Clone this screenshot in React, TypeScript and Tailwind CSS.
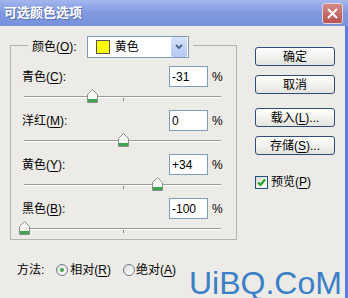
import type { ReactNode } from 'react';

const FONT = { fontFamily: '"Liberation Sans", "Noto Sans CJK SC", sans-serif' };

interface ChannelRow {
  id: string;
  name: string;
  key: string;
  value: number;
}

const channels: ChannelRow[] = [
  { id: 'c', name: '青色', key: 'C', value: -31 },
  { id: 'm', name: '洋红', key: 'M', value: 0 },
  { id: 'y', name: '黄色', key: 'Y', value: 34 },
  { id: 'k', name: '黑色', key: 'B', value: -100 },
];

function formatValue(v: number) {
  if (v > 0) return `+${v}`;
  return String(v);
}

function Mnemonic({ label, k, tail = '' }: { label: string; k: string; tail?: string }) {
  return (
    <span>
      {label}(<span className="underline underline-offset-[2px]">{k}</span>){tail}
    </span>
  );
}

function Thumb() {
  return (
    <svg width="11" height="14" viewBox="0 0 11 14">
      <path d="M0.5 13.5 V5.5 L5.5 0.5 L10.5 5.5 V13.5 Z" fill="#f6f6f2" stroke="#8c8c88" />
      <rect x="1" y="10" width="9" height="3" fill="#3da552" />
      <line x1="1.5" y1="6" x2="5.5" y2="2" stroke="#ffffff" />
    </svg>
  );
}

function Slider({ value }: { value: number }) {
  // track spans x 24..221, centre at 123.5
  const left = 99.5 + value * 0.99 - 5.5;
  return (
    <div className="relative ml-[2px] h-[23px] w-[197px]">
      <div className="absolute left-0 right-0 top-[9px] h-px bg-[#9a9a96]" />
      <div className="absolute left-0 right-0 top-[10px] h-px bg-white" />
      <div className="absolute left-[99px] top-[11px] h-[3px] w-px bg-[#8a8a86]" />
      <div className="absolute top-[2px]" style={{ left }}>
        <Thumb />
      </div>
    </div>
  );
}

function Row({ row }: { row: ChannelRow }) {
  return (
    <>
      <div className="flex h-[21px] w-[200px] items-center">
        <span className="flex-1">
          <Mnemonic label={row.name} k={row.key} tail=":" />
        </span>
        <div className="flex h-[21px] w-[39px] items-center border border-[#7f9db9] bg-white pl-[2px]">
          {formatValue(row.value)}
        </div>
        <span className="ml-[4px] w-[10px]">%</span>
      </div>
      <Slider value={row.value} />
    </>
  );
}

function XpButton({ children }: { children: ReactNode }) {
  return (
    <div className="flex h-[19px] w-[80px] items-center justify-center rounded-[3px] border border-[#2f4d7c] bg-gradient-to-b from-white to-[#e4e4de] text-[12px] text-black">
      {children}
    </div>
  );
}

function Radio({ checked }: { checked?: boolean }) {
  return (
    <div className="flex h-[12px] w-[12px] items-center justify-center rounded-full border border-[#6c7c90] bg-gradient-to-br from-[#dcdcd6] to-white">
      {checked && <div className="h-[4px] w-[4px] rounded-full bg-[#3aa84a]" />}
    </div>
  );
}

export default function App() {
  return (
    <div
      className="relative flex h-[298px] w-[348px] flex-col overflow-hidden bg-[#ecebe7] text-[12px] text-black"
      style={FONT}
    >
      {/* title bar */}
      <div className="flex h-[26px] shrink-0 items-center justify-between bg-gradient-to-b from-[#a4b6ee] via-[#7f98e0] to-[#7892de] pl-[4px] pr-[5px]">
        <span className="text-[13px] font-bold text-white [text-shadow:1px_1px_0_#5a6fb0]">可选颜色选项</span>
        <div className="flex h-[21px] w-[21px] items-center justify-center rounded-[3px] border border-[#e8d4d4] bg-gradient-to-b from-[#d28a86] to-[#b7514f]">
          <svg width="11" height="11" viewBox="0 0 11 11">
            <path d="M1.5 1.5 L9.5 9.5 M9.5 1.5 L1.5 9.5" stroke="white" strokeWidth="2" strokeLinecap="round" />
          </svg>
        </div>
      </div>

      <div className="flex flex-1 border-r-[3px] border-[#5b7de0]">
        {/* left column */}
        <div className="flex w-[237px] flex-col pl-[10px]">
          <div className="mt-[19px] h-[195px] w-[227px] border border-[#b4b4ae] pl-[11px]">
            <div className="-mt-[10px] ml-[6px] flex h-[22px] w-fit items-center bg-[#ecebe7] px-[4px]">
              <Mnemonic label="颜色" k="O" tail=":" />
              <div className="ml-[10px] flex h-[22px] w-[102px] items-center border border-[#7f9db9] bg-white pl-[8px] pr-px">
                <div className="h-[14px] w-[14px] border border-[#555] bg-[#ffff00]" />
                <span className="ml-[5px] flex-1">黄色</span>
                <div className="flex h-[20px] w-[16px] items-center justify-center rounded-[2px] bg-gradient-to-b from-[#d6e2fb] to-[#b3c8f4]">
                  <svg width="8" height="6" viewBox="0 0 8 6">
                    <path d="M1 1 L4 4 L7 1" fill="none" stroke="#4d6185" strokeWidth="1.8" />
                  </svg>
                </div>
              </div>
            </div>
            <div className="mt-[8px] flex flex-col">
              {channels.map(row => (
                <Row key={row.id} row={row} />
              ))}
            </div>
          </div>

          <div className="ml-[7px] mt-[20px] flex h-[20px] items-center">
            <span>方法:</span>
            <div className="ml-[12px]">
              <Radio checked />
            </div>
            <span className="ml-[2px]">
              <Mnemonic label="相对" k="R" />
            </span>
            <div className="ml-[12px]">
              <Radio />
            </div>
            <span className="ml-[1px]">
              <Mnemonic label="绝对" k="A" />
            </span>
          </div>
        </div>

        {/* right column */}
        <div className="ml-[18px] mt-[21px] flex flex-col">
          <XpButton>确定</XpButton>
          <div className="mt-[9px]">
            <XpButton>取消</XpButton>
          </div>
          <div className="mt-[14px]">
            <XpButton>
              <Mnemonic label="载入" k="L" tail="..." />
            </XpButton>
          </div>
          <div className="mt-[9px]">
            <XpButton>
              <Mnemonic label="存储" k="S" tail="..." />
            </XpButton>
          </div>
          <div className="mt-[18px] flex items-center">
            <div className="flex h-[13px] w-[13px] items-center justify-center border border-[#1c5180] bg-gradient-to-br from-[#dcdcd6] to-white">
              <svg width="9" height="9" viewBox="0 0 9 9">
                <path d="M1 4.5 L3.5 7 L8 1.5" fill="none" stroke="#21a121" strokeWidth="2" />
              </svg>
            </div>
            <span className="ml-[3px]">
              <Mnemonic label="预览" k="P" />
            </span>
          </div>
        </div>
      </div>

      {/* watermark */}
      <div className="absolute left-[189px] top-[270px] text-[32px] leading-[27px] text-[#3a80c8]">UiBQ.CoM</div>
    </div>
  );
}
